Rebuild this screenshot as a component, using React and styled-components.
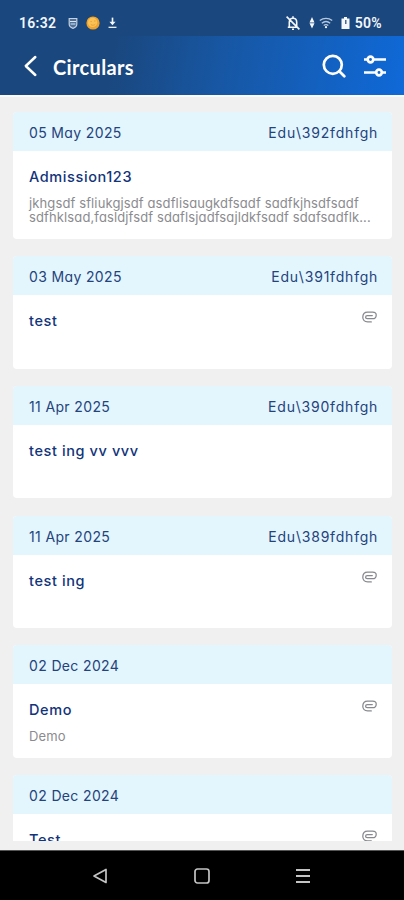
import styled, { createGlobalStyle } from 'styled-components';

const GlobalStyle = createGlobalStyle`
	* {
		box-sizing: border-box;
	}
	body {
		margin: 0;
		background-color: #f0f0f0;
		font-family: Inter, 'Noto Sans', sans-serif;
	}
`;

const Screen = styled.div`
	display: flex;
	flex-direction: column;
	width: 100%;
	height: 100vh;
	overflow: hidden;
`;

const StatusBar = styled.div`
	display: flex;
	flex: none;
	align-items: center;
	justify-content: space-between;
	height: 36px;
	padding: 10px 22px 0 19px;
	background-color: #1a477e;
	color: #f4f7fb;
	font-family: Roboto, sans-serif;
	font-weight: 600;
	font-size: 14px;
`;

const StatusGroup = styled.div`
	display: flex;
	align-items: center;
	height: 26px;
`;

const StatusText = styled.span`
	letter-spacing: ${(props) => props.$spacing || '0'};
	margin: ${(props) => props.$margin || '0'};
`;

const StatusIcon = styled.svg`
	display: block;
	margin-right: ${(props) => props.$gap || '0'};
`;

const AppBar = styled.header`
	display: flex;
	flex: none;
	align-items: center;
	height: 59px;
	padding: 1px 18px 0 22px;
	background: linear-gradient(100deg, #1a477e 0%, #1a477e 28%, #1757a4 55%, #0f69d8 100%);
	color: white;
`;

const Title = styled.h1`
	flex: 1;
	margin: 1px 0 0 14px;
	font-family: Lato, sans-serif;
	font-weight: 700;
	font-size: 20px;
	line-height: 26px;
	letter-spacing: 0.35px;
`;

const IconButton = styled.button`
	display: flex;
	padding: 0;
	border: none;
	background: none;
	color: inherit;
	margin-left: ${(props) => props.$gap || '0'};
`;

const List = styled.main`
	display: flex;
	flex: 1;
	flex-direction: column;
	gap: 17.2px;
	min-height: 0;
	margin-bottom: 9px;
	padding: 15px 12px 0 13px;
	border-top: 2px solid #fafafa;
	overflow: hidden;
`;

const Card = styled.article`
	flex: none;
	height: ${(props) => (props.$tall ? '127px' : '112.5px')};
	border-radius: 4px;
	background-color: white;
	overflow: hidden;
`;

const CardHeader = styled.div`
	display: flex;
	align-items: center;
	justify-content: space-between;
	height: 39px;
	padding: 2px 14px 0 16px;
	background-color: #e3f5fd;
	color: #23437c;
	font-size: 14px;
	font-feature-settings: 'cv11';
`;

const DateText = styled.span`
	letter-spacing: 0.36px;
`;

const RefText = styled.span`
	letter-spacing: 0.8px;
	margin-right: -0.2px;
`;

const CardBody = styled.div`
	padding: 16px 15px 0 16px;
`;

const CardTop = styled.div`
	display: flex;
	justify-content: space-between;
	height: 20px;
`;

const Subject = styled.h2`
	margin: 0;
	color: #12347a;
	font-weight: 500;
	font-size: 14.5px;
	line-height: 20px;
	letter-spacing: 0.6px;
	font-feature-settings: 'cv11';
`;

const Summary = styled.p`
	margin: 9px 0 0;
	color: #8b8b8f;
	font-size: 13px;
	line-height: 14px;
	letter-spacing: 0.12px;
	font-feature-settings: 'cv11';
	white-space: pre;
`;

const NavBar = styled.nav`
	display: flex;
	flex: none;
	align-items: center;
	justify-content: space-between;
	height: 50px;
	padding: 0 93px 0 92px;
	background-color: black;
	border-top: 1px solid #555;
`;

const ShieldIcon = () => (
	<StatusIcon width="10" height="13" viewBox="0 0 10 13" $gap="8px">
		<path d="M1.2 1.5h7.6v5.8c0 2.2-1.6 3.4-3.8 4-2.2-.6-3.8-1.8-3.8-4z" fill="#4f729c" stroke="#c5d1e0" strokeWidth="1.2" />
		<path d="M2 4.5h6M2.6 7h4.8" stroke="#dde5ee" strokeWidth="1.2" />
	</StatusIcon>
);

const CoinIcon = () => (
	<StatusIcon width="14" height="14" viewBox="0 0 14 14" $gap="8px">
		<circle cx="7" cy="7" r="6.6" fill="#f0a42c" />
		<circle cx="6.6" cy="6.4" r="4.6" fill="#fbc355" />
		<path d="M4.4 5.6h1.4M8 5h1.6M4.8 8.6c1.6 1 3.4.8 4.6-.6" stroke="#e5a03a" strokeWidth="1" fill="none" />
	</StatusIcon>
);

const DownloadIcon = () => (
	<StatusIcon width="9" height="12" viewBox="0 0 10 12">
		<path d="M5 0v6" stroke="#f4f7fb" strokeWidth="1.8" />
		<path d="M1.6 4.6h6.8L5 8.4z" fill="#f4f7fb" />
		<path d="M.6 10.8h8.8" stroke="#f4f7fb" strokeWidth="1.4" />
	</StatusIcon>
);

const BellOffIcon = () => (
	<StatusIcon width="16" height="16" viewBox="0 0 16 16" fill="none" stroke="#f4f7fb" strokeWidth="1.6" $gap="8px">
		<path d="M4.3 12V7.2C4.3 4.8 5.8 3.2 8 3.2s3.7 1.6 3.7 4V12M2.8 12.2h10.4M8 1.3v2M7 14.3h2M1.6 1.6l12.8 12.8" />
	</StatusIcon>
);

const DataIcon = () => (
	<StatusIcon width="6" height="12" viewBox="0 0 6 12" $gap="4px">
		<path d="M3 0l2.5 5.4h-5zM3 11.6l2.5-5.4h-5z" fill="#f4f7fb" />
	</StatusIcon>
);

const WifiIcon = () => (
	<StatusIcon width="14" height="12" viewBox="0 0 14 12" fill="none" stroke="#b7c8dd" strokeWidth="1.3" $gap="8px">
		<path d="M.8 3.6c3.6-3 8.8-3 12.4 0M2.8 6.2c2.5-2 5.9-2 8.4 0M4.7 8.5c1.4-1.1 3.2-1.1 4.6 0" />
		<circle cx="7" cy="10.2" r="1.1" fill="#f4f7fb" stroke="none" />
	</StatusIcon>
);

const BatteryIcon = () => (
	<StatusIcon width="9" height="12" viewBox="0 0 9 12">
		<path d="M3 0h3v1.4h2.5V12H.5V1.4H3z" fill="#f4f7fb" />
		<path d="M4.8 3v4" stroke="#1a477e" strokeWidth="1.2" />
	</StatusIcon>
);

const ClipIcon = () => (
	<svg width="15" height="12" viewBox="0 0 15 12" fill="none" stroke="#88898e" strokeWidth="1.25" strokeLinecap="round">
		<path d="M9.3 10.9H5.6C2.6 10.9.8 9 .8 6.2.8 3 2.7 1 5.6 1h5.1c2.2 0 3.5 1.2 3.5 2.9 0 2.2-1.5 3.8-3.7 3.8H5.2c-1 0-1.6-.6-1.6-1.4 0-1 .7-1.7 1.7-1.7h5" />
	</svg>
);

const circulars = [
	{
		date: '05 May 2025',
		ref: 'Edu\\392fdhfgh',
		subject: 'Admission123',
		summary: 'jkhgsdf sfliukgjsdf asdflisaugkdfsadf sadfkjhsdfsadf\nsdfhklsad,fasldjfsdf sdaflsjadfsajldkfsadf sdafsadflk...',
		tall: true
	},
	{ date: '03 May 2025', ref: 'Edu\\391fdhfgh', subject: 'test', clip: true },
	{ date: '11 Apr 2025', ref: 'Edu\\390fdhfgh', subject: 'test ing vv vvv' },
	{ date: '11 Apr 2025', ref: 'Edu\\389fdhfgh', subject: 'test ing', clip: true },
	{ date: '02 Dec 2024', subject: 'Demo', summary: 'Demo', clip: true },
	{ date: '02 Dec 2024', subject: 'Test', clip: true }
];

const Circular = ({ item }) => {
	return (
		<Card $tall={item.tall}>
			<CardHeader>
				<DateText>{item.date}</DateText>
				<RefText>{item.ref}</RefText>
			</CardHeader>
			<CardBody>
				<CardTop>
					<Subject>{item.subject}</Subject>
					{item.clip && <ClipIcon />}
				</CardTop>
				{item.summary && <Summary>{item.summary}</Summary>}
			</CardBody>
		</Card>
	);
};

const App = () => {
	return (
		<>
			<GlobalStyle />
			<Screen>
				<StatusBar>
					<StatusGroup>
						<StatusText $spacing="0.3px" $margin="0 12px 0 0">16:32</StatusText>
						<ShieldIcon />
						<CoinIcon />
						<DownloadIcon />
					</StatusGroup>
					<StatusGroup>
						<BellOffIcon />
						<DataIcon />
						<WifiIcon />
						<BatteryIcon />
						<StatusText $spacing="0.3px" $margin="0 0 0 5px">50%</StatusText>
					</StatusGroup>
				</StatusBar>
				<AppBar>
					<IconButton aria-label="Back">
						<svg width="17" height="24" viewBox="0 0 17 24" fill="none" stroke="white" strokeWidth="2.5" strokeLinecap="round" strokeLinejoin="round">
							<path d="M13.3 3L3.8 12l9.5 9" />
						</svg>
					</IconButton>
					<Title>Circulars</Title>
					<IconButton aria-label="Search">
						<svg width="24" height="24" viewBox="0 0 24 24" fill="none" stroke="white" strokeWidth="2.7" strokeLinecap="round">
							<circle cx="10.8" cy="10.8" r="9" />
							<path d="M17.3 17.3l5 5" />
						</svg>
					</IconButton>
					<IconButton aria-label="Filter" $gap="18px">
						<svg width="22" height="24" viewBox="0 0 22 24" fill="none" stroke="white" strokeWidth="2.7">
							<path d="M0 5.5h4M9 5.5h13M0 18.5h12M18 18.5h4" />
							<circle cx="6.5" cy="5.5" r="2.8" />
							<circle cx="15" cy="18.5" r="2.8" />
						</svg>
					</IconButton>
				</AppBar>
				<List>
					{circulars.map((item, index) => (
						<Circular key={index} item={item} />
					))}
				</List>
				<NavBar>
					<svg width="16" height="16" viewBox="0 0 16 16" fill="none" stroke="#c4c4c4" strokeWidth="1.7" strokeLinejoin="round">
						<path d="M14 1.5v13L2 8z" />
					</svg>
					<svg width="16" height="16" viewBox="0 0 16 16" fill="none" stroke="#c4c4c4" strokeWidth="1.7">
						<rect x="1" y="1" width="14" height="14" rx="2.5" />
					</svg>
					<svg width="16" height="16" viewBox="0 0 16 16" stroke="#c4c4c4" strokeWidth="2">
						<path d="M1 2h14M1 8h14M1 14h14" />
					</svg>
				</NavBar>
			</Screen>
		</>
	);
};

export default App;
